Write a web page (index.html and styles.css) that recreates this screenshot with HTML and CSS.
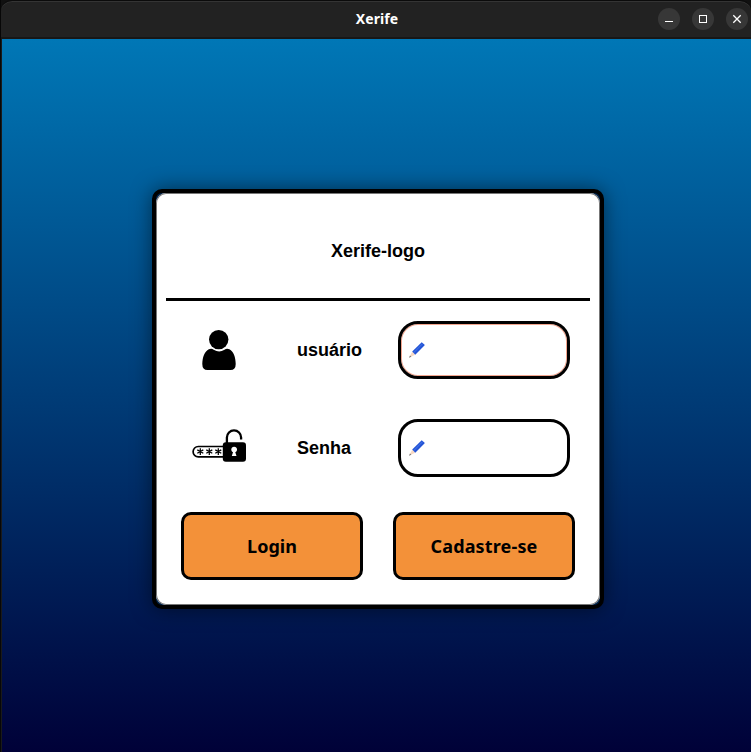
FILE: index.html
```html
<!DOCTYPE html>
<html lang="pt-BR">
<head>
<meta charset="utf-8">
<title>Xerife</title>
<link rel="stylesheet" href="styles.css">
</head>
<body>
<div class="window">
  <header class="titlebar">
    <h1 class="title">Xerife</h1>
    <div class="controls">
      <span class="control"><svg width="22" height="22" viewBox="0 0 22 22"><path d="M7 13.5h8" stroke="#fff"/></svg></span>
      <span class="control"><svg width="22" height="22" viewBox="0 0 22 22"><rect x="7.5" y="7.5" width="7" height="7" fill="none" stroke="#fff"/></svg></span>
      <span class="control"><svg width="22" height="22" viewBox="0 0 22 22"><path d="M7.3 7.3l7.4 7.4M14.7 7.3l-7.4 7.4" stroke="#fff" stroke-width="1.3"/></svg></span>
    </div>
  </header>
  <main class="screen">
    <form class="card">
      <div class="card-inner">
        <h2 class="logo">Xerife-logo</h2>
        <div class="row field">
          <svg class="icon" width="54" height="42" viewBox="0 0 54 42"><circle cx="26.700" cy="10.600" r="9.700"/><path d="M16.800 20.300Q19.500 18.900 21.700 20.700Q27.200 24.100 32.500 20.700Q34.800 18.900 37.400 20.300C41.500 22.600 43.600 28 43.700 35Q43.700 41 38.500 41H15.500Q10.300 41 10.300 35C10.400 28 12.700 22.600 16.800 20.300Z"/></svg>
          <label class="label">usuário</label>
          <div class="input focused"><svg class="pencil" width="20" height="20" viewBox="0 0 20 20"><use href="#pencil"/></svg></div>
        </div>
        <div class="row field">
          <svg class="icon" width="54" height="42" viewBox="0 0 54 42">
            <path d="M31 19.500H6.300a5 5 0 0 0 0 10.400H31" fill="none" stroke="#000" stroke-width="1.700"/>
            <path d="M8.300 21.300v6.600M5.300 22.900l6 3.400M11.300 22.900l-6 3.400M17.300 21.300v6.600M14.300 22.900l6 3.400M20.300 22.900l-6 3.400M26.300 21.300v6.600M23.300 22.900l6 3.400M29.300 22.900l-6 3.400" stroke="#000" stroke-width="1.250"/>
            <path d="M34.900 16V10.500a7.100 7.100 0 0 1 14.200 0V12.500" fill="none" stroke="#000" stroke-width="2.300"/>
            <rect x="30.800" y="15.200" width="23.200" height="19.600" rx="3"/>
            <path d="M41 25.200a2.900 2.900 0 1 1 2.300 0l1.200 3.700h-4.700Z" fill="#fff"/>
          </svg>
          <label class="label">Senha</label>
          <div class="input"><svg class="pencil" width="20" height="20" viewBox="0 0 20 20"><use href="#pencil"/></svg></div>
        </div>
        <div class="row actions">
          <button class="button" type="button">Login</button>
          <button class="button signup" type="button">Cadastre-se</button>
        </div>
      </div>
    </form>
  </main>
</div>
<svg class="defs" width="0" height="0">
  <symbol id="pencil" viewBox="0 0 20 20">
    <path d="M2.200 17.500L5.200 11.700L8.300 14.700Z" fill="#f8d9c2"/>
    <path d="M2 17.800L3 15.600L4.400 16.700Z" fill="#777"/>
    <path d="M5.200 11.600L14.700 2.200L17.900 5L8.300 14.800Z" fill="#2454d6"/>
    <path d="M6.600 12.100L15.200 3.500L15.900 4.100L7.300 12.800Z" fill="#3f70e6"/>
  </symbol>
</svg>
</body>
</html>
```

FILE: styles.css
```css
* { box-sizing: border-box; }
body {
  margin: 0;
  background: #111;
  font-family: "Liberation Sans", sans-serif;
  color: #000;
  overflow: hidden;
}
.window {
  height: 752px;
  display: flex;
  flex-direction: column;
  border-left: 1px solid #070707;
}
.titlebar {
  height: 39px;
  flex: none;
  display: grid;
  grid-template-columns: 1fr auto 1fr;
  align-items: center;
  background: #222;
  border-top: 1px solid #0b0b0b;
  border-bottom: 2px solid #171717;
  border-radius: 11px 11px 0 0;
  box-shadow: inset 0 1px #343434;
}
.title {
  grid-column: 2;
  margin: 0 0 0 2px;
  font: bold 14px/36px "Noto Sans", sans-serif;
  letter-spacing: .1px;
  color: #fff;
}
.controls {
  display: flex;
  justify-content: flex-end;
  gap: 12px;
  padding-right: 3px;
}
.control {
  width: 22px;
  height: 22px;
  border-radius: 50%;
  background: #373737;
}
.control svg { display: block; }
.screen {
  flex: 1;
  border-left: 1px solid #1a1a1a;
  padding: 150px 147px 0 150px;
  background: linear-gradient(#0077b6, #000138);
}
.card {
  width: 452px;
  height: 420px;
  border: 4px solid #000;
  border-radius: 10px;
  background: #02254f;
  box-shadow: 0 0 20px rgba(0, 0, 0, .5);
}
.card-inner {
  height: 412px;
  padding: 0 10px;
  border-radius: 10px;
  background: #fff;
  box-shadow: inset 0 0 0 1px #777;
}
.logo {
  height: 108px;
  margin: 0;
  padding-top: 6px;
  border-bottom: 3px solid #000;
  font-size: 18px;
  line-height: 104px;
  text-align: center;
}
.row {
  height: 98px;
  display: grid;
  align-items: center;
  justify-items: center;
}
.field { grid-template-columns: 106px 106px 212px; }
.actions { grid-template-columns: 1fr 1fr; }
.icon { display: block; }
.label {
  justify-self: start;
  padding-left: 25px;
  font-size: 18px;
  font-weight: bold;
}
.input {
  width: 172px;
  height: 58px;
  display: flex;
  align-items: center;
  padding-left: 6px;
  border: 3px solid #000;
  border-radius: 20px;
}
.focused { box-shadow: inset 0 0 0 1px #f3a58e; }
.pencil { display: block; }
.button {
  width: 182px;
  height: 68px;
  padding: 0;
  border: 3px solid #000;
  border-radius: 10px;
  background: #f39139;
  color: #000;
  font: bold 18px "Noto Sans", sans-serif;
}
.signup { letter-spacing: .15px; }
.defs { display: none; }
```
